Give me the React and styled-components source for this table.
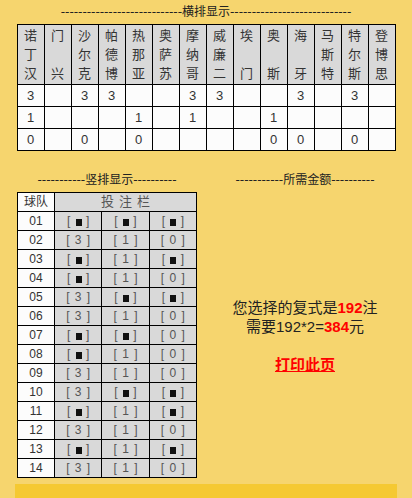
import React from 'react'
import styled, { createGlobalStyle } from 'styled-components'

const GlobalStyle = createGlobalStyle`
  body {
    margin: 0;
    background: #f6d56e;
    font-family: "Liberation Sans", "Noto Sans CJK SC", sans-serif;
    color: #222;
  }
`

//team names, one char per line (blank line for two-char names)
const teams = [
  ['诺', '丁', '汉'],
  ['门', '', '兴'],
  ['沙', '尔', '克'],
  ['帕', '德', '博'],
  ['热', '那', '亚'],
  ['奥', '萨', '苏'],
  ['摩', '纳', '哥'],
  ['威', '廉', '二'],
  ['埃', '', '门'],
  ['奥', '', '斯'],
  ['海', '', '牙'],
  ['马', '斯', '特'],
  ['特', '尔', '斯'],
  ['登', '博', '思'],
]

//picks per team: [3, 1, 0]
const picks = [
  [1, 1, 1],
  [0, 0, 0],
  [1, 0, 1],
  [1, 0, 0],
  [0, 1, 1],
  [0, 0, 0],
  [1, 1, 0],
  [1, 0, 0],
  [0, 0, 0],
  [0, 1, 1],
  [1, 0, 1],
  [0, 0, 0],
  [1, 0, 1],
  [0, 0, 0],
]
const results = ['3', '1', '0']

const Page = styled.div`
  padding-top: 4px;
`

const Title = styled.div`
  text-align: center;
  font-family: "DejaVu Sans", "Noto Sans CJK SC", sans-serif;
  font-size: 12px;
  line-height: 16px;
  color: #222;
  white-space: nowrap;
`

const HTable = styled.table`
  border-collapse: collapse;
  table-layout: fixed;
  width: 379px;
  margin: 4px auto 0;
  font-size: 13px;
  color: #333;
`

const HCell = styled.td`
  width: 26px;
  border: 1px solid #000;
  padding: 1px 0;
  text-align: center;
  line-height: 19px;
  background: ${(p) => (p.$head ? '#d9d9d9' : '#fcfcfc')};
`

const Line = styled.div`
  height: 19px;
`

const Columns = styled.div`
  display: grid;
  grid-template-columns: 198px 198px;
  margin: 21px 8px 0;
`

const Column = styled.div`
  display: flex;
  flex-direction: column;
  align-items: center;
`

const VTable = styled.table`
  border-collapse: collapse;
  table-layout: fixed;
  width: 180px;
  margin-top: 4px;
  font-size: 12px;
  color: #333;
`

const VCell = styled.td`
  border: 1px solid #000;
  padding: 0;
  height: 18px;
  line-height: 18px;
  text-align: center;
  width: ${(p) => p.$w}px;
  background: ${(p) => (p.$grey ? '#d9d9d9' : '#fcfcfc')};
  color: ${(p) => (p.$grey ? '#555' : '#333')};
`

const Bet = styled.span`
  letter-spacing: 1px;
  margin-left: 1px;
`

const Spaced = styled.span`
  letter-spacing: 5px;
  margin-left: 5px;
  font-size: 13px;
`

const Mark = styled.span`
  display: inline-block;
  width: 6px;
  height: 7px;
  background: #111;
  vertical-align: -1px;
`

const Summary = styled.div`
  flex: 1;
  display: flex;
  flex-direction: column;
  justify-content: center;
  align-items: center;
  font-size: 15px;
  line-height: 19px;
  color: #222;
  padding-top: 6px;
`

const Red = styled.b`
  color: #ff0000;
`

const PrintLink = styled.a`
  margin-top: 19px;
  color: #ff0000;
  font-weight: bold;
  text-decoration: underline;
  cursor: pointer;
`

const FooterBar = styled.div`
  margin: 6px 0 0 15px;
  width: 382px;
  height: 30px;
  background: #f5c932;
`

const dashes = (n) => '-'.repeat(n)

const App = () => {
  return (
    <Page>
      <GlobalStyle />
      <Title>
        {dashes(28)}横排显示{dashes(28)}
      </Title>
      <HTable>
        <tbody>
          <tr>
            {teams.map((t, i) => (
              <HCell key={i} $head>
                {t.map((c, j) => (
                  <Line key={j}>{c}</Line>
                ))}
              </HCell>
            ))}
          </tr>
          {results.map((r, k) => (
            <tr key={r}>
              {picks.map((p, i) => (
                <HCell key={i}>{p[k] ? r : ''}</HCell>
              ))}
            </tr>
          ))}
        </tbody>
      </HTable>
      <Columns>
        <Column>
          <Title>
            {dashes(11)}竖排显示{dashes(10)}
          </Title>
          <VTable>
            <tbody>
              <tr>
                <VCell $w={36}>球队</VCell>
                <VCell colSpan={3} $grey>
                  <Spaced>投注栏</Spaced>
                </VCell>
              </tr>
              {picks.map((p, i) => (
                <tr key={i}>
                  <VCell $w={36}>{String(i + 1).padStart(2, '0')}</VCell>
                  {results.map((r, k) => (
                    <VCell key={r} $w={k === 0 ? 47 : 46} $grey>
                      <Bet>
                        {'[ '}
                        {p[k] ? <Mark /> : r}
                        {' ]'}
                      </Bet>
                    </VCell>
                  ))}
                </tr>
              ))}
            </tbody>
          </VTable>
        </Column>
        <Column>
          <Title>
            {dashes(11)}所需金额{dashes(10)}
          </Title>
          <Summary>
            <div>
              您选择的复式是<Red>192</Red>注
            </div>
            <div>
              需要192*2=<Red>384</Red>元
            </div>
            <PrintLink>打印此页</PrintLink>
          </Summary>
        </Column>
      </Columns>
      <FooterBar />
    </Page>
  )
}

export default App
